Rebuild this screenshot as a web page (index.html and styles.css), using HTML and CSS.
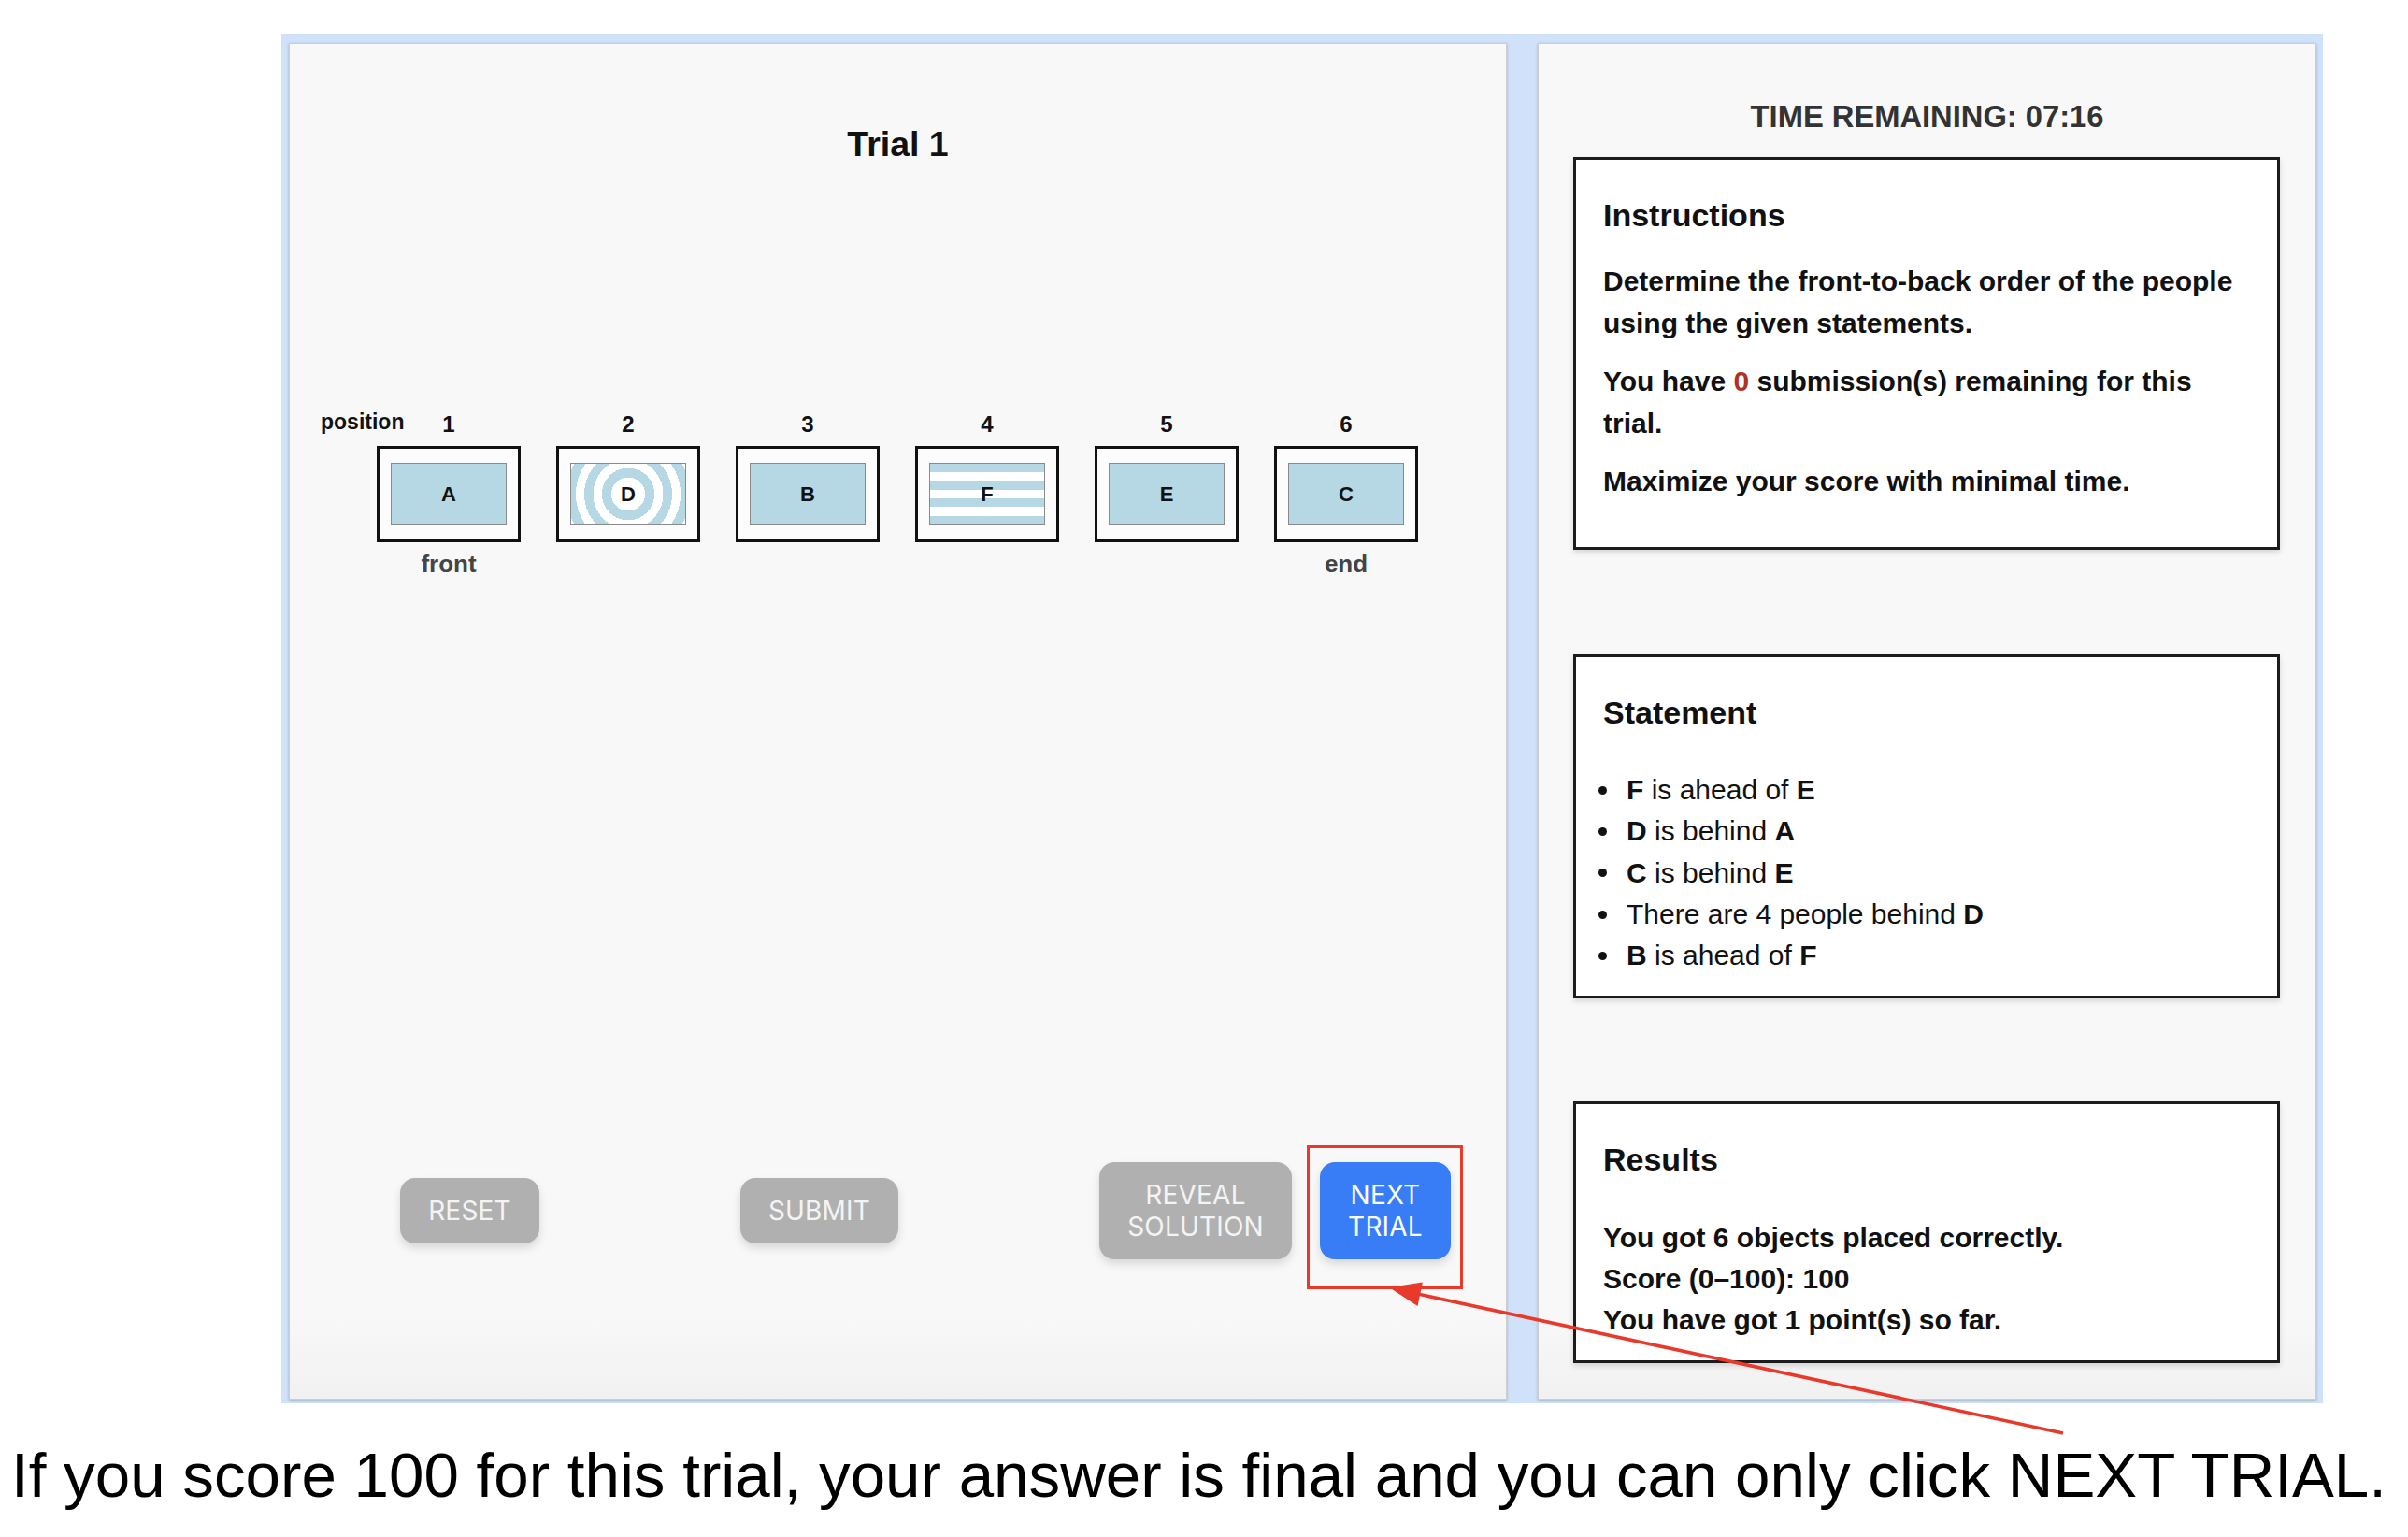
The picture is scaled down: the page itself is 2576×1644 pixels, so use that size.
FILE: index.html
```html
<!DOCTYPE html>
<html lang="en">
<head>
<meta charset="utf-8">
<title>Trial 1</title>
<link rel="stylesheet" href="styles.css">
</head>
<body>
<div class="page">
  <div class="frame">
    <section class="panel panel-left">
      <h1 class="trial-title">Trial 1</h1>
      <div class="track">
        <div class="numrow">
          <span class="pos-label">position</span>
          <div class="grid6 nums">
            <span>1</span><span>2</span><span>3</span><span>4</span><span>5</span><span>6</span>
          </div>
        </div>
        <div class="grid6 slots">
          <div class="slot"><div class="tile">A</div></div>
          <div class="slot"><div class="tile tile-rings">D</div></div>
          <div class="slot"><div class="tile">B</div></div>
          <div class="slot"><div class="tile tile-stripes">F</div></div>
          <div class="slot"><div class="tile">E</div></div>
          <div class="slot"><div class="tile">C</div></div>
        </div>
        <div class="grid6 ends">
          <span class="end-label">front</span>
          <span></span><span></span><span></span><span></span>
          <span class="end-label">end</span>
        </div>
      </div>
      <div class="buttons">
        <button class="btn btn-gray btn-reset">RESET</button>
        <button class="btn btn-gray btn-submit">SUBMIT</button>
        <button class="btn btn-gray btn-reveal">REVEAL<br>SOLUTION</button>
        <button class="btn btn-blue btn-next">NEXT<br>TRIAL</button>
      </div>
    </section>
    <section class="panel panel-right">
      <div class="timer">TIME REMAINING: 07:16</div>
      <div class="card card-instructions">
        <h2 class="card-title">Instructions</h2>
        <p class="instr instr-first">Determine the front-to-back order of the people using the given statements.</p>
        <p class="instr">You have <span class="red">0</span> submission(s) remaining for this trial.</p>
        <p class="instr">Maximize your score with minimal time.</p>
      </div>
      <div class="card card-statement">
        <h2 class="card-title">Statement</h2>
        <ul class="stmts">
          <li><b>F</b>&nbsp;is ahead of&nbsp;<b>E</b></li>
          <li><b>D</b>&nbsp;is behind&nbsp;<b>A</b></li>
          <li><b>C</b>&nbsp;is behind&nbsp;<b>E</b></li>
          <li>There are 4 people behind&nbsp;<b>D</b></li>
          <li><b>B</b>&nbsp;is ahead of&nbsp;<b>F</b></li>
        </ul>
      </div>
      <div class="card card-results">
        <h2 class="card-title">Results</h2>
        <div class="results">
          <div>You got 6 objects placed correctly.</div>
          <div>Score (0–100): 100</div>
          <div>You have got 1 point(s) so far.</div>
        </div>
      </div>
    </section>
  </div>
  <p class="caption">If you score 100 for this trial, your answer is final and you can only click NEXT TRIAL.</p>
  <svg class="annot" width="2576" height="1644" viewBox="0 0 2576 1644" xmlns="http://www.w3.org/2000/svg">
    <rect x="1399.5" y="1226.5" width="164" height="151" fill="none" stroke="#e8392b" stroke-width="3"/>
    <line x1="2207" y1="1533" x2="1512" y2="1383" stroke="#e8392b" stroke-width="3.5"/>
    <polygon points="1486,1377 1521.9,1371.5 1516.5,1396.9" fill="#e8392b"/>
  </svg>
</div>
</body>
</html>
```

FILE: styles.css
```css
html, body {
  margin: 0;
  padding: 0;
  background: #ffffff;
}
body {
  width: 2576px;
  height: 1644px;
  overflow: hidden;
  font-family: "Liberation Sans", Arial, Helvetica, sans-serif;
  color: #111;
}
.page {
  position: relative;
  box-sizing: border-box;
  width: 2576px;
  height: 1644px;
  padding-top: 36px;
}
.frame {
  box-sizing: border-box;
  margin: 0 0 0 301px;
  width: 2184px;
  height: 1465px;
  background: #cfe2f9;
  padding: 10px 7px 4px 8px;
  display: flex;
  gap: 33px;
}
.panel {
  box-sizing: border-box;
  height: 1451px;
  border: 1px solid #cdcdcd;
  background: linear-gradient(to bottom, #f8f8f8 0, #f8f8f8 94%, #f1f1f1 100%);
  box-shadow: 0 1px 3px rgba(0, 0, 0, 0.22);
}
.panel-left {
  width: 1303px;
  display: flex;
  flex-direction: column;
}
.panel-right {
  width: 833px;
  padding: 58px 0 0 37px;
}

/* ---------- left panel ---------- */
.trial-title {
  margin: 85px 0 0 0;
  font-size: 37.5px;
  line-height: 44px;
  font-weight: bold;
  text-align: center;
  color: #111;
}
.track {
  margin: 264px 0 0 93px;
}
.grid6 {
  display: grid;
  grid-template-columns: repeat(6, 154px);
  column-gap: 38px;
}
.numrow {
  display: flex;
  align-items: flex-end;
  height: 28px;
}
.pos-label {
  width: 90px;
  margin-left: -60px;
  margin-right: -30px;
  padding-bottom: 3px;
  font-size: 23px;
  line-height: 28px;
  font-weight: bold;
  color: #111;
  white-space: nowrap;
}
.nums span {
  text-align: center;
  font-size: 24px;
  line-height: 28px;
  font-weight: bold;
  color: #111;
}
.slots {
  margin-top: 9px;
}
.slot {
  box-sizing: border-box;
  width: 154px;
  height: 103px;
  border: 3px solid #111;
  background: #fcfcfc;
  display: flex;
  align-items: center;
  justify-content: center;
}
.tile {
  box-sizing: border-box;
  width: 124px;
  height: 67px;
  border: 1px solid #8a8a8a;
  background: #b6d8e4;
  display: flex;
  align-items: center;
  justify-content: center;
  font-size: 22px;
  font-weight: bold;
  color: #111;
}
.tile-rings {
  background: radial-gradient(circle at 50% 50%,
    #ffffff 0, #ffffff 18px,
    #b6d8e4 18px, #b6d8e4 28px,
    #ffffff 28px, #ffffff 37.5px,
    #b6d8e4 37.5px, #b6d8e4 47px,
    #ffffff 47px, #ffffff 56px,
    #b6d8e4 56px, #b6d8e4 66px,
    #ffffff 66px);
}
.tile-stripes {
  background: linear-gradient(to bottom,
    #b6d8e4 0, #b6d8e4 14.2857%,
    #ffffff 14.2857%, #ffffff 28.5714%,
    #b6d8e4 28.5714%, #b6d8e4 42.8571%,
    #ffffff 42.8571%, #ffffff 57.1428%,
    #b6d8e4 57.1428%, #b6d8e4 71.4285%,
    #ffffff 71.4285%, #ffffff 85.7142%,
    #b6d8e4 85.7142%, #b6d8e4 100%);
}
.ends {
  margin-top: 8px;
}
.end-label {
  text-align: center;
  font-size: 26px;
  line-height: 30px;
  font-weight: bold;
  color: #444;
}

.buttons {
  margin-top: 625px;
  padding-left: 118px;
  display: flex;
  align-items: center;
}
.btn {
  box-sizing: border-box;
  border: none;
  border-radius: 16px;
  padding: 18px 0;
  font-family: Inter, Roboto, "Liberation Sans", sans-serif;
  font-size: 28px;
  line-height: 34px;
  font-weight: 400;
  letter-spacing: 0.2px;
  text-align: center;
  color: #f4f4f4;
  box-shadow: 0 5px 10px rgba(0, 0, 0, 0.13);
}
.btn-gray {
  background: #b0b0b0;
}
.btn-blue {
  background: #387cf6;
  color: #ffffff;
}
.btn-reset { width: 149px; }
.btn-submit { width: 169px; margin-left: 215px; }
.btn-reveal { width: 206px; margin-left: 215px; }
.btn-next { width: 140px; margin-left: 30px; }

/* ---------- right panel ---------- */
.timer {
  margin-left: -37px;
  text-align: center;
  font-size: 32.7px;
  line-height: 40px;
  font-weight: bold;
  color: #333;
}
.card {
  box-sizing: border-box;
  width: 756px;
  border: 3px solid #1c1c1c;
  background: #ffffff;
  padding: 39px 31px 0 29px;
  box-shadow: 0 3px 6px rgba(0, 0, 0, 0.14);
}
.card-instructions {
  margin-top: 23px;
  height: 420px;
}
.card-statement {
  margin-top: 112px;
  height: 368px;
}
.card-results {
  margin-top: 110px;
  height: 280px;
}
.card-title {
  margin: 0;
  font-size: 34px;
  line-height: 40px;
  font-weight: bold;
  color: #111;
}
.instr {
  margin: 17px 0 0 0;
  font-size: 30px;
  line-height: 45px;
  font-weight: bold;
  color: #111;
}
.instr-first {
  margin-top: 28px;
}
.red {
  color: #b0302a;
}
.stmts {
  list-style: none;
  margin: 41px 0 0 0;
  padding: 0;
}
.stmts li {
  display: flex;
  align-items: center;
  font-size: 30px;
  line-height: 44.3px;
  color: #111;
  white-space: nowrap;
}
.stmts li::before {
  content: "";
  flex: none;
  width: 9px;
  height: 9px;
  border-radius: 50%;
  background: #111;
  margin-left: -5px;
  margin-right: 21px;
}
.stmts b {
  font-weight: bold;
}
.results {
  margin-top: 42px;
  font-size: 30px;
  line-height: 44px;
  font-weight: bold;
  color: #111;
}

/* ---------- caption & annotation ---------- */
.caption {
  margin: 37px 0 0 0;
  padding-left: 12px;
  font-size: 67.3px;
  line-height: 80px;
  color: #000;
  white-space: nowrap;
}
.annot {
  position: absolute;
  left: 0;
  top: 0;
  pointer-events: none;
}
```
